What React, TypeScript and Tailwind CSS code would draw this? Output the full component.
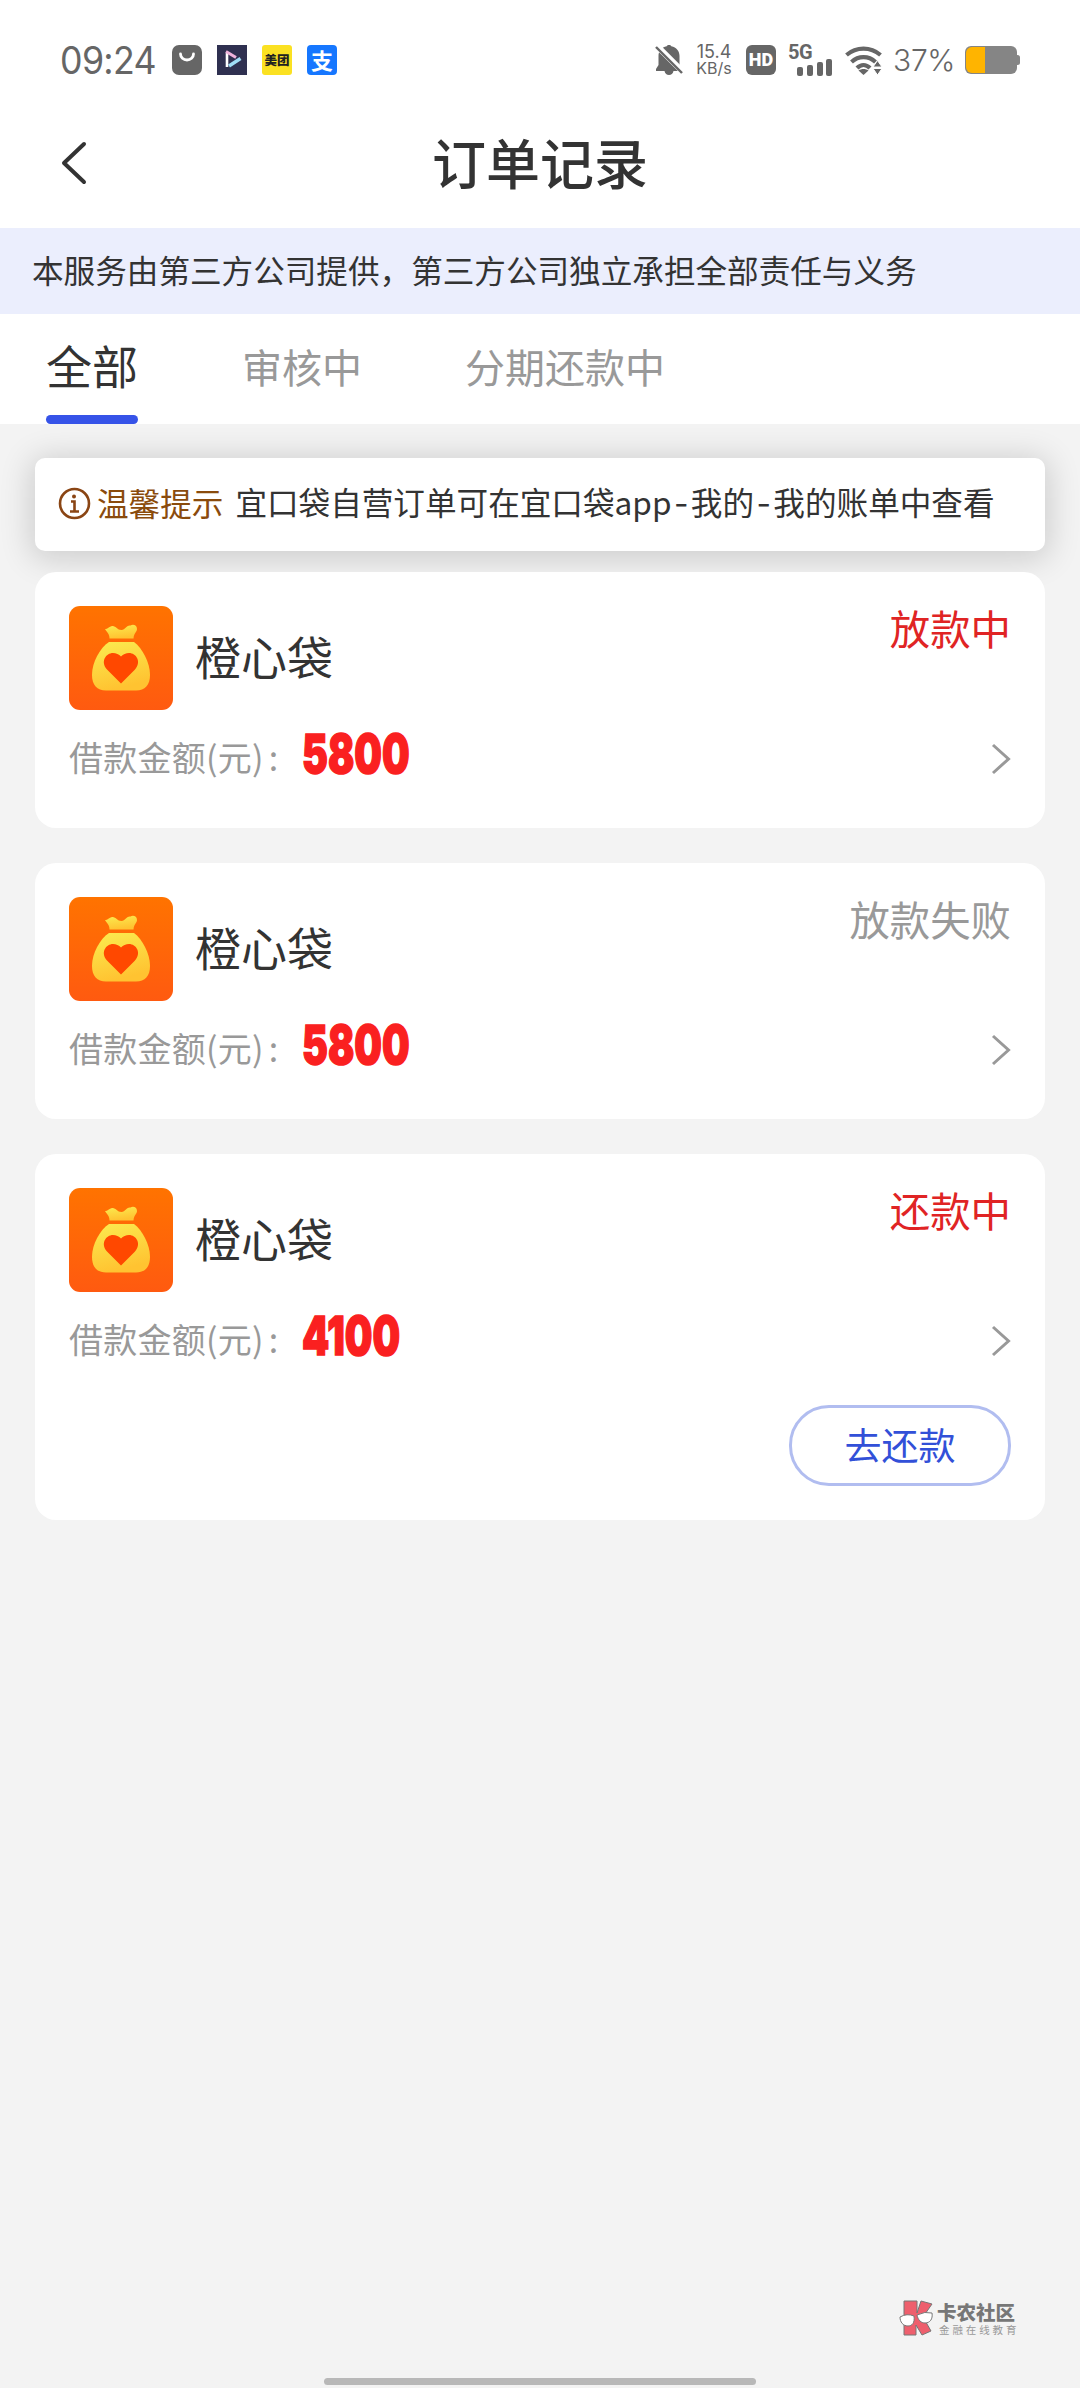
import React from 'react';

const orders = [
  { status: '放款中', tone: 'text-[#e02424]', amount: '5800', pay: false },
  { status: '放款失败', tone: 'text-[#999999]', amount: '5800', pay: false },
  { status: '还款中', tone: 'text-[#e02424]', amount: '4100', pay: true },
];

function StatusBar() {
  return (
    <header className="flex h-[120px] items-center pl-[60px] pr-[60px] text-[#666666]">
      <span className="w-[112px] origin-left scale-x-[0.94] whitespace-nowrap font-['Inter'] text-[38px] leading-[40px] tracking-[-0.700px]">09:24</span>
      <svg className="h-[30px] w-[30px]" viewBox="0 0 30 30">
        <rect width="30" height="30" rx="7" fill="#666" />
        <path d="M8.500 9a6.500 6 0 0 0 13 0" fill="none" stroke="#fff" strokeWidth="2.800" strokeLinecap="round" />
      </svg>
      <svg className="ml-[15px] h-[30px] w-[30px]" viewBox="0 0 30 30">
        <rect width="30" height="30" fill="#2f3050" />
        <path d="M10 8v14" stroke="#fff" strokeWidth="2.600" />
        <path d="M9 6.500 19 12.500" stroke="#efb3dc" strokeWidth="3" />
        <path d="M23.500 13.500 12 21" stroke="#9fdcf5" strokeWidth="3.400" />
      </svg>
      <span className="ml-[15px] flex h-[30px] w-[30px] items-center justify-center whitespace-nowrap rounded-[3px] bg-[#fbe122] font-['Noto_Sans_CJK_SC',sans-serif] text-[12.500px] font-black leading-none text-[#222222]">美团</span>
      <span className="ml-[15px] flex h-[30px] w-[30px] items-center justify-center rounded-[4px] bg-[#1677ff] pb-[3px] font-['Noto_Sans_CJK_SC',sans-serif] text-[22px] font-bold leading-none text-white">支</span>

      <svg className="ml-auto h-[30px] w-[28px]" viewBox="0 0 28 30">
        <path d="M14 0c-1 0-2 .4-2.300 1.200C6.500 2.300 3.500 6 3.500 11v9L1 24v2h8.500c.5 2.500 2.300 4 4.500 4s4-1.500 4.500-4H27v-2l-2.500-4v-9c0-5-3-8.700-8.200-9.800C16 .4 15 0 14 0z" fill="#666" />
        <path d="m1 0 27 27" stroke="#fff" strokeWidth="6" />
        <path d="m1 2 26 26" stroke="#666" strokeWidth="2.400" />
      </svg>
      <div className="ml-[12px] w-[38px] whitespace-nowrap text-center font-['Inter'] leading-[17px]">
        <div className="text-[18px]">15.4</div>
        <div className="text-[16px]">KB/s</div>
      </div>
      <span className="ml-[13px] flex h-[30px] w-[30px] items-center justify-center rounded-[6px] bg-[#666666] font-['Roboto'] text-[18px] font-black leading-none text-white">HD</span>
      <div className="ml-[12px] h-[31px] w-[45px]">
        <div className="h-[14px] font-['Roboto'] text-[20px] font-bold leading-[15px] tracking-[-0.500px]">5G</div>
        <svg className="ml-[9px] h-[17px] w-[36px]" viewBox="0 0 36 17" fill="#666">
          <rect x="0" y="8" width="6" height="9" rx="2" />
          <rect x="10" y="6" width="6" height="11" rx="2" />
          <rect x="20" y="3" width="6" height="14" rx="2" />
          <rect x="29" y="0" width="6" height="17" rx="2" />
        </svg>
      </div>
      <svg className="ml-[12px] h-[29px] w-[37px]" viewBox="0 0 37 29" fill="none" stroke="#666" strokeWidth="4.200">
        <path d="M1.500 9c10-8.500 24-8.500 34 0" />
        <path d="M6.500 16c7-6.500 17-6.500 24 0" />
        <path d="M12 22c4-4 9-4 13 0" />
        <path d="M13.500 24.500c3-2 7-2 10 0L18.500 29z" fill="#666" stroke="none" />
        <path d="M28 21 32.500 14.500 37 21zM28 22.500h9L32.500 29z" fill="#666" stroke="#fff" strokeWidth="1" />
      </svg>
      <span className="ml-[11px] w-[62px] whitespace-nowrap font-['Inter'] text-[30px] leading-[32px] tracking-[-0.300px] [font-weight:350]">37%</span>
      <svg className="ml-[10px] h-[28px] w-[55px]" viewBox="0 0 55 28">
        <rect x="50" y="9" width="5" height="10" rx="2.500" fill="#858585" />
        <rect width="52" height="28" rx="6" fill="#858585" />
        <path d="M20 1H7a6 6 0 0 0-6 6v14a6 6 0 0 0 6 6h13z" fill="#ffb400" />
      </svg>
    </header>
  );
}

function BagIcon() {
  return (
    <svg className="h-[104px] w-[104px] shrink-0" viewBox="0 0 104 104">
      <defs>
        <linearGradient id="tile" x1="0" y1="0" x2="0" y2="1">
          <stop offset="0" stopColor="#ff7300" />
          <stop offset="1" stopColor="#ff5a10" />
        </linearGradient>
        <linearGradient id="bag" x1="0" y1="0" x2=".3" y2="1">
          <stop offset="0" stopColor="#fbec50" />
          <stop offset="1" stopColor="#ffc331" />
        </linearGradient>
      </defs>
      <rect width="104" height="104" rx="11" fill="url(#tile)" />
      <path d="M36 23c2 .5 4-2.500 7-3 4-.5 5 4 9.500 4 4 0 4.500-5 9-4.500 2.500-1.500 6.500-.5 6.500 3.500 0 3-3 3.500-3.500 9.500H40.500c0-5-2.500-6-4.500-9.500z" fill="url(#bag)" />
      <path d="M40 36h25c8 6 16 20 16 33 0 10-5 15.500-14 15.500H37c-9 0-14-5.500-14-15.500 0-13 8-27 17-33z" fill="url(#bag)" />
      <path d="M52 77.500 38 63.500c-7-8-1-16.500 6-16.500 3 0 6 1.500 8 3.500 2-2 5-3.500 8-3.500 7 0 13 8.500 6 16.500z" fill="#ff4800" />
    </svg>
  );
}

function OrderCard({ order }: { order: (typeof orders)[number] }) {
  return (
    <article className={`rounded-[21px] bg-white px-[34px] pt-[34px] ${order.pay ? 'h-[366px]' : 'h-[256px]'}`}>
      <div className="flex">
        <BagIcon />
        <h2 className="ml-[22px] text-[46px] leading-[98px] text-[#333333]">橙心袋</h2>
        <span className={`ml-auto text-[40.400px] leading-[44px] ${order.tone}`}>{order.status}</span>
      </div>
      <div className="flex h-[94px] items-center">
        <span className="w-[233px] whitespace-nowrap text-[34px] leading-[48px] tracking-[0.250px] text-[#999999]">
          借款金额(元)<span className="ml-[5px]">:</span>
        </span>
        <span className="mt-[-6px] origin-left scale-x-[0.72] font-['Inter'] text-[54px] font-black leading-[56px] text-[#fa2020] [-webkit-text-stroke:1.500px_#fa2020]">{order.amount}</span>
        <svg className="mt-[3px] ml-auto h-[32px] w-[20px]" viewBox="0 0 20 32" fill="none" stroke="#999" strokeWidth="3">
          <path d="M2 2 17.500 16 2 30" />
        </svg>
      </div>
      {order.pay && (
        <div className="flex justify-end pt-[19px]">
          <button className="h-[81px] w-[222px] rounded-[40px] border-[3px] border-[#b1bdf0] pb-[4px] text-[37px] leading-[70px] text-[#3250d8]">去还款</button>
        </div>
      )}
    </article>
  );
}

export default function App() {
  return (
    <div className="relative flex h-[2388px] w-[1080px] flex-col overflow-hidden bg-[#f3f3f3] font-['Noto_Sans_CJK_SC',sans-serif]">
      <div className="bg-white">
        <StatusBar />
        <div className="grid h-[108px] grid-cols-[100px_1fr_100px] items-center">
          <svg className="ml-[60px] mb-[22px] h-[44px] w-[28px]" viewBox="0 0 28 44" fill="none" stroke="#333" strokeWidth="4" strokeLinecap="round" strokeLinejoin="round">
            <path d="M24 3 4 22l20 19" />
          </svg>
          <h1 className="mb-[25px] text-center text-[54px] font-medium leading-[80px] text-[#333333]">订单记录</h1>
        </div>
        <p className="h-[86px] bg-[#ebeefd] pl-[32px] text-[31.600px] leading-[83px] text-[#333333]">本服务由第三方公司提供，第三方公司独立承担全部责任与义务</p>
        <nav className="flex h-[110px] items-start pl-[46px] text-[40px] text-[#999999]">
          <div className="flex h-[110px] w-[92px] flex-col justify-between text-[46px] leading-[100px] text-[#333333]">
            <span className="h-[101px]">全部</span>
            <span className="h-[9px] rounded-[5px] bg-[#3653e8]" />
          </div>
          <span className="ml-[104px] leading-[105px]">审核中</span>
          <span className="ml-[103px] leading-[105px]">分期还款中</span>
        </nav>
      </div>
      <main className="px-[35px] pt-[34px]">
        <div className="flex h-[93px] items-center rounded-[10px] bg-white pl-[23px] text-[31.600px] leading-[44px] shadow-[0_4px_32px_4px_rgba(0,0,0,0.16)]">
          <svg className="mb-[2px] h-[33px] w-[33px]" viewBox="0 0 33 33" fill="none" stroke="#8a4514">
            <circle cx="16.500" cy="16.500" r="14.500" strokeWidth="2.600" />
            <path d="M13 14.500h3.500V24M12 24.500h9" strokeWidth="2.600" />
            <circle cx="16" cy="9.500" r="2" fill="#8a4514" stroke="none" />
          </svg>
          <span className="mb-[5px] ml-[6px] text-[#8a4b0c]">温馨提示</span>
          <span className="mb-[5px] ml-[12px] text-[#333333]">
            宜口袋自营订单可在宜口袋app<span className="mx-[2.400px] font-['Inter']">-</span>我的<span className="mx-[2.400px] font-['Inter']">-</span>我的账单中查看
          </span>
        </div>
        <div className="relative mt-[21px] flex flex-col gap-[35px]">
          {orders.map((order, i) => (
            <OrderCard key={i} order={order} />
          ))}
        </div>
      </main>
      <footer className="mt-auto flex flex-col">
        <div className="mr-[63px] flex items-center gap-[3px] self-end">
          <svg className="h-[36px] w-[35px]" viewBox="0 0 35 36" stroke="#777" strokeWidth="1">
            <path d="M5 1h13v12l4-12 11 3-9 13 8 14-9 4-6-10v10H5z" fill="#ee5f6d" />
            <path d="M1 17q7-4 14-1c1 7-2 10-6 10-5 0-8-4-8-9zM18 15q8-4 15-2c1 6-2 10-7 10-4 0-7-3-8-8z" fill="#fff" />
          </svg>
          <div className="w-[80px] whitespace-nowrap text-[#777777]">
            <div className="text-[19.500px] font-black leading-[22px]">卡农社区</div>
            <div className="ml-[2px] text-[10.500px] leading-[13px] tracking-[2.900px] text-[#999999]">金融在线教育</div>
          </div>
        </div>
        <div className="mt-[42px] mb-[3px] h-[7px] w-[432px] self-center rounded-full bg-[#b8b8b8]" />
      </footer>
    </div>
  );
}
